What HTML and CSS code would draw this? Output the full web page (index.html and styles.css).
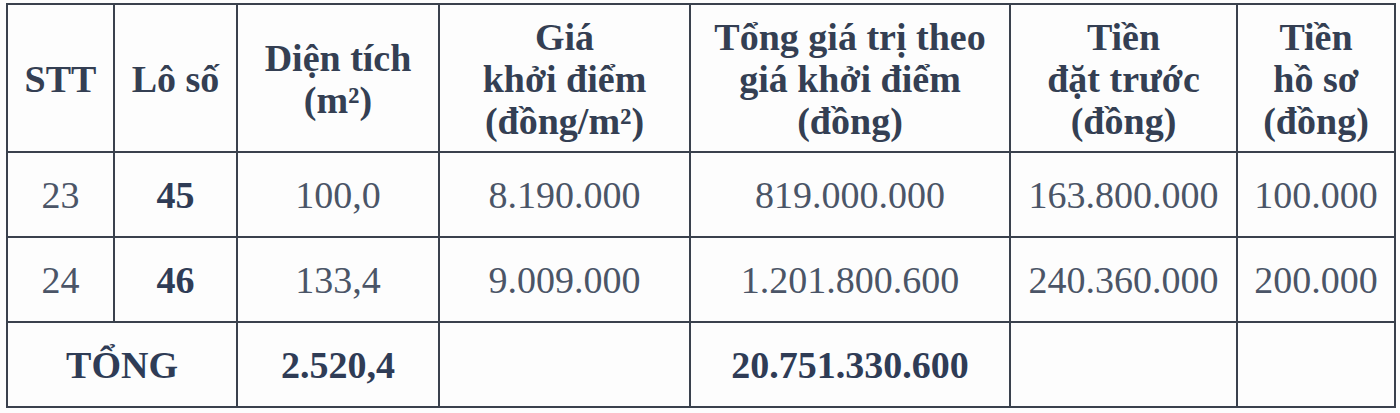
FILE: index.html
```html
<!DOCTYPE html>
<html lang="vi">
<head>
<meta charset="utf-8">
<title>Bảng giá khởi điểm</title>
<link rel="stylesheet" href="styles.css">
</head>
<body>
<div class="page">
<table class="price-table">
  <colgroup>
    <col class="c1"><col class="c2"><col class="c3"><col class="c4"><col class="c5"><col class="c6"><col class="c7">
  </colgroup>
  <thead>
    <tr class="head-row">
      <th>STT</th>
      <th>Lô số</th>
      <th>Diện tích<br>(m²)</th>
      <th>Giá<br>khởi điểm<br>(đồng/m²)</th>
      <th>Tổng giá trị theo<br>giá khởi điểm<br>(đồng)</th>
      <th>Tiền<br>đặt trước<br>(đồng)</th>
      <th>Tiền<br>hồ sơ<br>(đồng)</th>
    </tr>
  </thead>
  <tbody>
    <tr class="data-row">
      <td>23</td>
      <td class="strong">45</td>
      <td>100,0</td>
      <td>8.190.000</td>
      <td>819.000.000</td>
      <td>163.800.000</td>
      <td>100.000</td>
    </tr>
    <tr class="data-row">
      <td>24</td>
      <td class="strong">46</td>
      <td>133,4</td>
      <td>9.009.000</td>
      <td>1.201.800.600</td>
      <td>240.360.000</td>
      <td>200.000</td>
    </tr>
    <tr class="data-row">
      <td colspan="2" class="strong">TỔNG</td>
      <td class="strong">2.520,4</td>
      <td></td>
      <td class="strong">20.751.330.600</td>
      <td></td>
      <td></td>
    </tr>
  </tbody>
</table>
</div>
</body>
</html>
```

FILE: styles.css
```css
html, body {
  margin: 0;
  padding: 0;
  background: #fdfdfd;
}
.page {
  padding: 3px 0 0 6px;
}
.price-table {
  table-layout: fixed;
  width: 1388px;
  border-collapse: collapse;
  font-family: "Liberation Serif", "Times New Roman", serif;
  font-size: 38px;
  color: #4b5567;
}
.c1 { width: 107px; }
.c2 { width: 123px; }
.c3 { width: 202px; }
.c4 { width: 251px; }
.c5 { width: 320px; }
.c6 { width: 227px; }
.c7 { width: 158px; }
.price-table th,
.price-table td {
  border: 2px solid #3a414d;
  padding: 0;
  text-align: center;
  vertical-align: middle;
}
.price-table th {
  font-weight: bold;
  color: #343f53;
  line-height: 42px;
}
.head-row th {
  height: 144px;
  padding-top: 2px;
}
.data-row td {
  height: 83px;
  line-height: 40px;
  white-space: nowrap;
}
.price-table td.strong {
  font-weight: bold;
  color: #2f3c56;
}
```
